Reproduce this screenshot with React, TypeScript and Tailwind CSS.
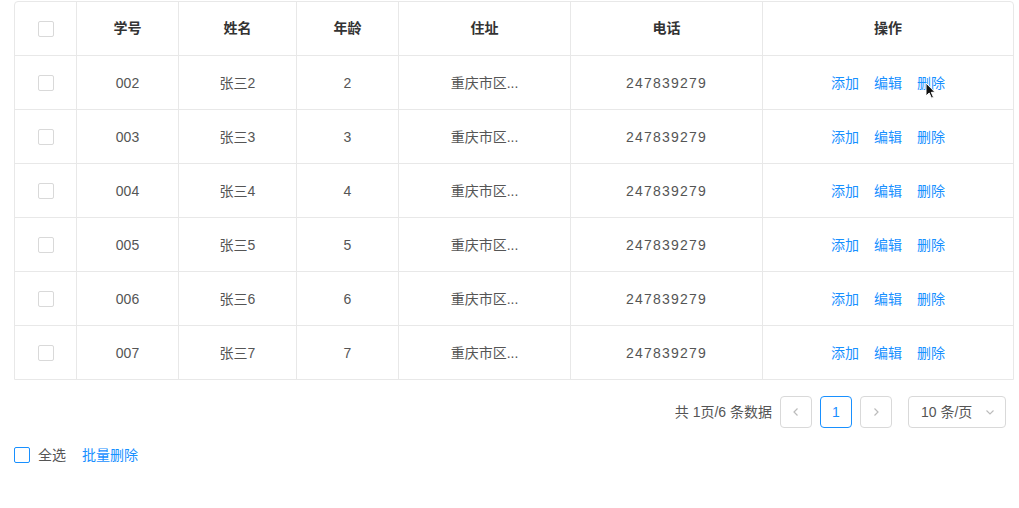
import React from "react";

// 学生列表 — 表格 + 分页 + 批量操作
const rows = [2, 3, 4, 5, 6, 7].map((n) => ({
  id: `00${n}`,
  name: `张三${n}`,
  age: n,
  addr: "重庆市区...",
  phone: "247839279",
}));

const cols = "grid grid-cols-[62px_102px_118px_102px_172px_192px_1fr]";

function Box({ active = false }: { active?: boolean }) {
  return (
    <span
      className={`inline-block w-4 h-4 rounded-[2px] border bg-white ${
        active ? "border-[#1890ff]" : "border-[#d9d9d9]"
      }`}
    />
  );
}

function Cell({ children, last = false }: { children: React.ReactNode; last?: boolean }) {
  return (
    <div className={`flex items-center justify-center ${last ? "" : "border-r border-[#e8e8e8]"}`}>
      {children}
    </div>
  );
}

export default function App() {
  return (
    <div
      className="relative w-[1019px] h-[508px] bg-white text-[14px] text-[#555]"
      style={{ fontFamily: '"Liberation Sans", "Noto Sans CJK SC", sans-serif' }}
    >
      <div className="pt-px pl-[14px]">
        <div className="w-[1000px] border border-[#e8e8e8] rounded-t-[4px]">
          {/* header */}
          <div className={`${cols} h-[54px] border-b border-[#e8e8e8] font-bold text-[#333]`}>
            <Cell><Box /></Cell>
            <Cell>学号</Cell>
            <Cell>姓名</Cell>
            <Cell>年龄</Cell>
            <Cell>住址</Cell>
            <Cell>电话</Cell>
            <Cell last>操作</Cell>
          </div>
          {rows.map((r, i) => (
            <div
              key={r.id}
              className={`${cols} ${i === rows.length - 1 ? "h-[53px]" : "h-[54px] border-b border-[#e8e8e8]"}`}
            >
              <Cell><Box /></Cell>
              <Cell><span className="pt-[2px]">{r.id}</span></Cell>
              <Cell><span className="pt-[2px]">{r.name}</span></Cell>
              <Cell><span className="pt-[2px]">{r.age}</span></Cell>
              <Cell><span className="pt-[2px]">{r.addr}</span></Cell>
              <Cell><span className="pt-[2px] tracking-[1.2px]">{r.phone}</span></Cell>
              <Cell last>
                <div className="flex gap-[15px] pt-[2px] text-[#1890ff]">
                  <span>添加</span>
                  <span>编辑</span>
                  <span>删除</span>
                </div>
              </Cell>
            </div>
          ))}
        </div>

        {/* pagination */}
        <div className="w-[1000px] mt-4 pr-[8px] flex items-center justify-end">
          <span className="mr-2">共 1页/6 条数据</span>
          <button className="w-8 h-8 rounded-[4px] border border-[#d9d9d9] flex items-center justify-center text-[#bbb]">
            <svg width="10" height="10" viewBox="0 0 10 10" fill="none" stroke="currentColor" strokeWidth="1.2">
              <path d="M6.5 1.5 3 5l3.5 3.5" />
            </svg>
          </button>
          <button className="ml-2 w-8 h-8 rounded-[4px] border border-[#1890ff] text-[#1890ff] flex items-center justify-center">
            1
          </button>
          <button className="ml-2 w-8 h-8 rounded-[4px] border border-[#d9d9d9] flex items-center justify-center text-[#bbb]">
            <svg width="10" height="10" viewBox="0 0 10 10" fill="none" stroke="currentColor" strokeWidth="1.2">
              <path d="M3.5 1.5 7 5 3.5 8.5" />
            </svg>
          </button>
          <div className="ml-4 w-[98px] h-8 rounded-[4px] border border-[#d9d9d9] flex items-center justify-between pl-3 pr-[10px] text-[#555]">
            <span>10 条/页</span>
            <svg width="10" height="10" viewBox="0 0 10 10" fill="none" stroke="#bbb" strokeWidth="1.1">
              <path d="M1.5 3.5 5 7l3.5-3.5" />
            </svg>
          </div>
        </div>

        {/* batch */}
        <div className="mt-[19px] flex items-center h-4">
          <Box active />
          <span className="ml-2">全选</span>
          <span className="ml-4 text-[#1890ff]">批量删除</span>
        </div>
      </div>

      {/* mouse pointer */}
      <svg className="absolute left-[925px] top-[82px]" width="12" height="18" viewBox="0 0 12 18">
        <path d="M1 1v13l3.2-3 2.3 5.2 2-.9-2.2-5H10z" fill="#111" stroke="#fff" strokeWidth="1" />
      </svg>
    </div>
  );
}
